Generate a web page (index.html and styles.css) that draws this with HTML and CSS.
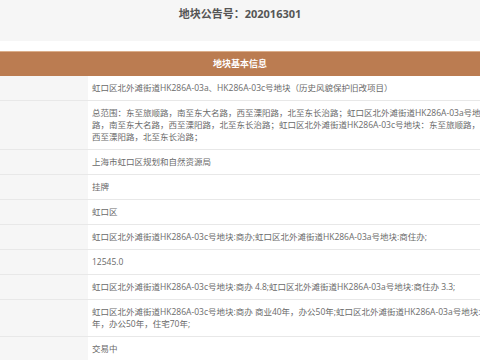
FILE: index.html
```html
<!DOCTYPE html>
<html lang="zh-CN">
<head>
<meta charset="utf-8">
<title>地块公告号：202016301</title>
<link rel="stylesheet" href="styles.css">
</head>
<body>
<div class="page">
  <div class="title-band">
    <h1 class="title">地块公告号：202016301</h1>
  </div>
  <div class="info">
    <div class="info-head">地块基本信息</div>
    <div class="row"><div class="label"></div><div class="value"><span class="line">虹口区北外滩街道HK286A-03a、HK286A-03c号地块（历史风貌保护旧改项目）</span></div></div>
    <div class="row"><div class="label"></div><div class="value"><span class="line">总范围：东至旅顺路，南至东大名路，西至溧阳路，北至东长治路；虹口区北外滩街道HK286A-03a号地块：东至旅顺</span><span class="line">路，南至东大名路，西至溧阳路，北至东长治路；虹口区北外滩街道HK286A-03c号地块：东至旅顺路，南至东大名路，</span><span class="line">西至溧阳路，北至东长治路；</span></div></div>
    <div class="row"><div class="label"></div><div class="value"><span class="line">上海市虹口区规划和自然资源局</span></div></div>
    <div class="row"><div class="label"></div><div class="value"><span class="line">挂牌</span></div></div>
    <div class="row"><div class="label"></div><div class="value"><span class="line">虹口区</span></div></div>
    <div class="row"><div class="label"></div><div class="value"><span class="line">虹口区北外滩街道HK286A-03c号地块:商办;虹口区北外滩街道HK286A-03a号地块:商住办;</span></div></div>
    <div class="row"><div class="label"></div><div class="value"><span class="line">12545.0</span></div></div>
    <div class="row"><div class="label"></div><div class="value"><span class="line">虹口区北外滩街道HK286A-03c号地块:商办 4.8;虹口区北外滩街道HK286A-03a号地块:商住办 3.3;</span></div></div>
    <div class="row"><div class="label"></div><div class="value"><span class="line">虹口区北外滩街道HK286A-03c号地块:商办 商业40年，办公50年;虹口区北外滩街道HK286A-03a号地块:商住办 商业40</span><span class="line">年，办公50年，住宅70年;</span></div></div>
    <div class="row"><div class="label"></div><div class="value"><span class="line">交易中</span></div></div>
  </div>
</div>
</body>
</html>
```
FILE: styles.css
```css
html, body {
  margin: 0;
  padding: 0;
  background: #ffffff;
  overflow: hidden;
}
.page {
  width: 480px;
  height: 360px;
  overflow: hidden;
  font-family: "Open Sans", "Noto Sans CJK SC", sans-serif;
}
.title-band {
  background: #f6f6f6;
  height: 41px;
  padding-top: 6px;
  box-sizing: border-box;
}
.title {
  margin: 0;
  text-align: center;
  font-size: 11px;
  line-height: 16px;
  font-weight: 700;
  color: #555555;
}
.info {
  margin-top: 10px;
}
.info-head {
  background: #bb7c51;
  border-top: 1px solid #dcae8a;
  height: 24px;
  line-height: 24px;
  text-align: center;
  color: #ffffff;
  font-weight: 700;
  font-size: 9px;
  font-family: "Noto Sans CJK SC", sans-serif;
}
.row {
  display: grid;
  grid-template-columns: 88px 1fr;
  border-bottom: 1px solid #e8e8e8;
}
.label {
  background: #f6f6f6;
}
.value {
  display: flex;
  flex-direction: column;
  padding: 6px 0 6px 4px;
  font-size: 8.5px;
  line-height: 12px;
  color: #6a6a6a;
  min-width: 0;
}
.line {
  white-space: nowrap;
}
```
